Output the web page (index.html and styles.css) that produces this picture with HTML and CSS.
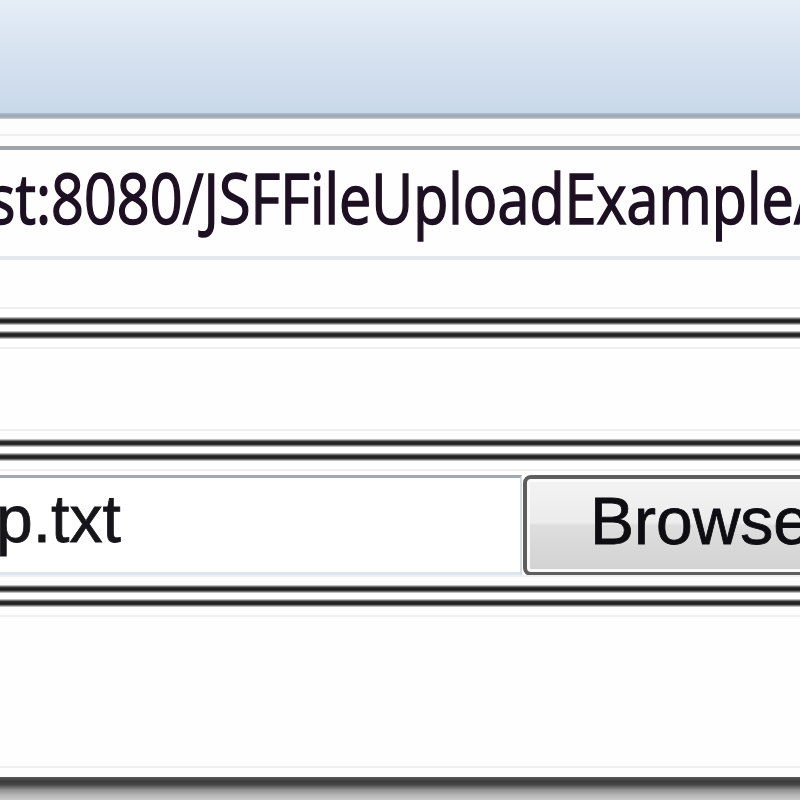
FILE: index.html
```html
<!DOCTYPE html>
<html>
<head>
<meta charset="utf-8">
<link rel="stylesheet" href="styles.css">
</head>
<body>
<div class="window">
  <div class="titlebar"></div>
  <div class="titlebar-edge"></div>
  <div class="toolbar-gap"><div class="faint"></div></div>
  <div class="address"><span class="url">st:8080/JSFFileUploadExample/</span></div>
  <div class="page">
    <div class="spacer first"></div>
    <div class="frame-rule">
      <div class="faint"></div>
      <div class="rule"></div>
      <div class="rule"></div>
      <div class="faint"></div>
    </div>
    <div class="spacer second"></div>
    <div class="frame-rule">
      <div class="faint"></div>
      <div class="rule"></div>
      <div class="rule"></div>
      <div class="faint"></div>
    </div>
    <div class="upload-row">
      <div class="file-input">p.txt</div>
      <div class="browse">Browse...</div>
    </div>
    <div class="frame-rule">
      <div class="faint"></div>
      <div class="rule"></div>
      <div class="rule"></div>
      <div class="faint"></div>
    </div>
    <div class="fill"><div class="faint"></div></div>
  </div>
  <div class="statusbar"></div>
</div>
</body>
</html>
```
FILE: styles.css
```css
html, body {
  margin: 0;
  padding: 0;
  background: #fefefe;
}
body {
  width: 800px;
  height: 800px;
  overflow: hidden;
}
.window {
  display: flex;
  flex-direction: column;
  width: 800px;
  height: 800px;
  overflow: hidden;
}
.titlebar {
  height: 113px;
  flex: none;
  background: linear-gradient(to bottom, #e5edf7 0%, #d6e2f0 50%, #c9d8ea 100%);
}
.titlebar-edge {
  height: 6px;
  flex: none;
  background: linear-gradient(to bottom, #b3bfcc 0%, #9ca4ae 50%, #c6cbd1 100%);
}
.toolbar-gap {
  height: 27px;
  flex: none;
  padding-top: 15px;
  box-sizing: border-box;
  background: #fdfdfd;
}
.faint {
  height: 2px;
  background: #eeeff0;
}
.address {
  flex: none;
  height: 114px;
  box-sizing: border-box;
  border-top: 4px solid #9fa4a9;
  border-bottom: 4px solid #e3e8ee;
  background: #fefefe;
  padding-top: 14px;
  white-space: nowrap;
  overflow: hidden;
}
.url {
  display: inline-block;
  margin-left: -12px;
  font-family: "Open Sans", "Noto Sans", sans-serif;
  font-size: 57.5px;
  line-height: 76px;
  color: #1c1022;
  -webkit-text-stroke: 1.3px #1c1022;
  transform: scaleY(1.2);
  transform-origin: 0 61px;
}
.page {
  flex: 1;
  display: flex;
  flex-direction: column;
  background: #fefefe;
}
.spacer.first {
  height: 47px;
}
.spacer.second {
  height: 80px;
}
.frame-rule {
  display: flex;
  flex-direction: column;
  gap: 6px;
}
.frame-rule .faint:first-child {
  margin-bottom: 2px;
}
.frame-rule .faint:last-child {
  margin-top: 2px;
}
.rule {
  height: 8px;
  background: linear-gradient(to bottom, #e6e6e6 0%, #6a6a6a 20%, #222222 35%, #222222 65%, #6a6a6a 80%, #e6e6e6 100%);
}
.upload-row {
  display: flex;
  align-items: flex-start;
  height: 104px;
  padding-top: 4px;
  box-sizing: border-box;
  white-space: nowrap;
}
.file-input {
  flex: none;
  width: 532px;
  margin-left: -10px;
  box-sizing: border-box;
  height: 100px;
  border-top: 3px solid #a2a9b0;
  border-left: 3px solid #e0e5ea;
  border-right: 2px solid #d6dde4;
  border-bottom: 3px solid #dde5ee;
  padding: 3px 0 15px 3px;
  font-family: "Liberation Sans", Arial, sans-serif;
  font-size: 66px;
  line-height: 76px;
  color: #15151a;
  -webkit-text-stroke: 0.8px #15151a;
  background: #ffffff;
}
.browse {
  flex: none;
  width: 420px;
  height: 101px;
  margin-left: 1px;
  box-sizing: border-box;
  border: 4px solid #5e5e5e;
  border-radius: 8px;
  box-shadow: inset 0 0 0 3px #fbfbfb;
  background: linear-gradient(to bottom, #f3f3f3 0%, #ececec 47%, #dedede 50%, #d2d2d2 100%);
  padding: 4px 0 13px 63px;
  font-family: "Liberation Sans", Arial, sans-serif;
  font-size: 66px;
  line-height: 76px;
  color: #0e0e12;
  -webkit-text-stroke: 0.8px #0e0e12;
}
.fill {
  flex: 1;
  display: flex;
  flex-direction: column;
  justify-content: flex-end;
  padding-bottom: 9px;
}
.statusbar {
  flex: none;
  height: 23px;
  background: linear-gradient(to bottom, #5a5a5a 0%, #3a3a3a 20%, #4a4a4a 35%, #8e8e8e 55%, #b4b4b4 78%, #c8c8c8 100%);
}
```
